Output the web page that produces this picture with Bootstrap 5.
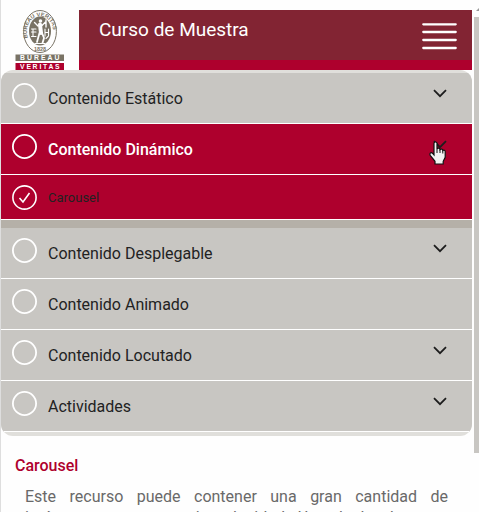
<!DOCTYPE html>
<html lang="es">
<head>
<meta charset="utf-8">
<meta name="viewport" content="width=device-width, initial-scale=1">
<title>Curso de Muestra</title>
<link href="https://cdn.jsdelivr.net/npm/bootstrap@5.3.0/dist/css/bootstrap.min.css" rel="stylesheet">
<style>
body{font-family:Roboto,"Liberation Sans",sans-serif;background:#fefefe;color:#222}
.page{border-left:1px solid #dedede;min-width:0}
.logo-box{width:78px}
.top-bar{background:#822433;border-bottom:10px solid #ae002d;height:60px;padding:9px 15px 0 20px}
.top-bar h1{font-size:19px;line-height:22px;font-weight:400}
.course-menu{background:#e0dfdb;padding:3px 0 4px;border-radius:12px;overflow:hidden}
.menu-row{border:0;border-bottom:1px solid #fff;background:#c8c6c2;color:#222;height:51px;padding:9px 25px 0 10px;font-size:16px;line-height:34px;text-align:left}
.menu-row.current{background:#ae002d;color:#fff;font-weight:500}
.menu-row.sub-row{background:#ae002d;height:45px;font-size:13px;line-height:28px}
.menu-label{padding-left:11px}
.chevron{color:#1d1d1d;margin-top:7px}
.ring{color:#fff}
.gap-band{background:#b5b0a8;height:8px}
.lesson{padding:19px 24px 0 14px;height:76px;overflow:hidden}
.lesson h2{font-size:16px;line-height:22px;color:#ae002d;margin-bottom:9px}
.lesson p{font-size:16px;line-height:21px;color:#696969;padding-left:10px;text-align:justify;text-align-last:justify}
.scroll-track{width:7px;background:#fefefe;padding:8px 0 0 2px}
.scroll-thumb{background:#c8c6c2;height:436px}
.pointer{position:absolute;left:428px;top:141px;pointer-events:none}
</style>
<script src="https://cdn.jsdelivr.net/npm/bootstrap@5.3.0/dist/js/bootstrap.bundle.min.js"></script>
</head>
<body class="d-flex vh-100 overflow-hidden position-relative">
<svg class="d-none">
<symbol id="ring" viewBox="0 0 26 26"><circle cx="13.5" cy="13.5" r="11.6" fill="none" stroke="currentColor" stroke-width="1.8"/></symbol>
<symbol id="chev" viewBox="0 0 14 9"><path d="M1 1.2 7 7.2 13 1.2" fill="none" stroke="currentColor" stroke-width="1.8"/></symbol>
</svg>
<div class="page flex-grow-1">
<header class="d-flex pt-2">
<a href="#" class="logo-box flex-shrink-0" aria-label="Bureau Veritas">
<svg class="d-block" width="78" height="62" viewBox="1 8 78 62">
<ellipse cx="40" cy="31.5" rx="16.4" ry="21" fill="none" stroke="#797365"/>
<ellipse cx="40" cy="31" rx="11" ry="14.5" fill="#797365"/>
<defs><path id="arc" d="M28 39C20 9 60 9 52 39"/></defs>
<text font-family="Liberation Sans" font-size="5.6" font-weight="700" fill="#797365"><textPath href="#arc" startOffset="1">BUREAU VERITAS</textPath></text>
<text x="40" y="51" font-family="Liberation Sans" font-size="5.5" font-weight="700" text-anchor="middle" fill="#797365">1828</text>
<g stroke="#fff" fill="none" stroke-linecap="round">
<circle cx="40.5" cy="21" r="1.8" fill="#fff" stroke="none"/>
<path d="M40 24.5 41 33" stroke-width="4"/><path d="M38 26 34.5 22.5M42 25.5 45.5 22M46 20V27" stroke-width="1.4"/>
<path d="M39.5 33 37 42M42 33 44 38 42.5 43" stroke-width="1.8"/>
<path d="M31.5 29H36M31.5 32H36M33 29V36.5M31.5 36.5H36M45 29V36M48.5 29V36M45 32.5H48.5M46 38.5 48 36.5M35 43.5H45" stroke-width="1.1"/>
</g>
<path fill="#797365" d="M15.5 54.5h48.5v6.5H15.5z"/><path fill="#ae002d" d="M15.5 63h48.5v7H15.5z"/>
<g fill="#fff" font-family="Liberation Sans" font-size="6.8" font-weight="700"><text x="20 27 34 41 47.5 54.5" y="60.2">BUREAU</text><text x="20 26.5 32.5 39.5 43 48.5 55" y="69">VERITAS</text></g>
</svg></a>
<div class="flex-grow-1 mt-auto">
<div class="top-bar d-flex justify-content-between align-items-start text-white">
<h1 class="m-0">Curso de Muestra</h1>
<button class="btn p-0 border-0 text-white lh-1" aria-label="Menú"><svg class="d-block mt-1" width="35" height="27" viewBox="0 0 35 27"><path d="M1.3 1.3H33.7M1.3 9H33.7M1.3 17H33.7M1.3 25H33.7" stroke="#fff" stroke-width="2.3" stroke-linecap="round"/></svg></button>
</div></div>
</header>
<nav class="course-menu d-flex flex-column" aria-label="Contenido del curso">
<button class="menu-row d-flex align-items-start w-100"><svg class="ring" width="26" height="26"><use href="#ring"/></svg><span class="menu-label flex-grow-1">Contenido Estático</span><svg class="chevron" width="14" height="9"><use href="#chev"/></svg></button>
<button class="menu-row current d-flex align-items-start w-100"><svg class="ring" width="26" height="26"><use href="#ring"/></svg><span class="menu-label flex-grow-1">Contenido Dinámico</span><svg class="chevron" width="14" height="9"><use href="#chev"/></svg></button>
<a href="#lesson" class="menu-row sub-row d-flex align-items-start w-100 text-decoration-none"><svg class="ring" width="26" height="26" viewBox="0 0 26 26" fill="none" stroke="currentColor" stroke-width="1.6"><circle cx="13.5" cy="13.5" r="11.6"/><path d="m8.5 14 3.5 4L18.500 9"/></svg><span class="menu-label">Carousel</span></a>
<div class="gap-band"></div>
<button class="menu-row d-flex align-items-start w-100"><svg class="ring" width="26" height="26"><use href="#ring"/></svg><span class="menu-label flex-grow-1">Contenido Desplegable</span><svg class="chevron" width="14" height="9"><use href="#chev"/></svg></button>
<button class="menu-row d-flex align-items-start w-100"><svg class="ring" width="26" height="26"><use href="#ring"/></svg><span class="menu-label">Contenido Animado</span></button>
<button class="menu-row d-flex align-items-start w-100"><svg class="ring" width="26" height="26"><use href="#ring"/></svg><span class="menu-label flex-grow-1">Contenido Locutado</span><svg class="chevron" width="14" height="9"><use href="#chev"/></svg></button>
<button class="menu-row d-flex align-items-start w-100"><svg class="ring" width="26" height="26"><use href="#ring"/></svg><span class="menu-label flex-grow-1">Actividades</span><svg class="chevron" width="14" height="9"><use href="#chev"/></svg></button>
</nav>
<main id="lesson" class="lesson">
<h2>Carousel</h2>
<p class="mb-0">Este recurso puede contener una gran cantidad de imágenes con su propia velocidad. Usando los botones</p>
</main>
</div>
<div class="scroll-track flex-shrink-0"><svg class="d-block" width="5" height="9" viewBox="0 0 5 9"><path d="M2 3 5 0V3z" fill="#999"/></svg><div class="scroll-thumb"></div></div>
<svg class="pointer" width="20" height="24" viewBox="0 0 20 24"><path d="M6 2.2C6 .6 9 .6 9 2.2V8c.5-1.3 3-1 3 .6 1-1 2.8-.5 2.8.9 1-.8 2.4-.2 2.4 1.3v5.5l-2 4V23H7v-2.7l-4.8-6C1 12.5 3 11 4.4 12.2L6 14z" fill="#f4f4f4" stroke="#111" stroke-width="1.2"/><path d="M9 8v4M12 8.5v3.5M14.8 9.5v3" stroke="#111"/></svg>
</body>
</html>
